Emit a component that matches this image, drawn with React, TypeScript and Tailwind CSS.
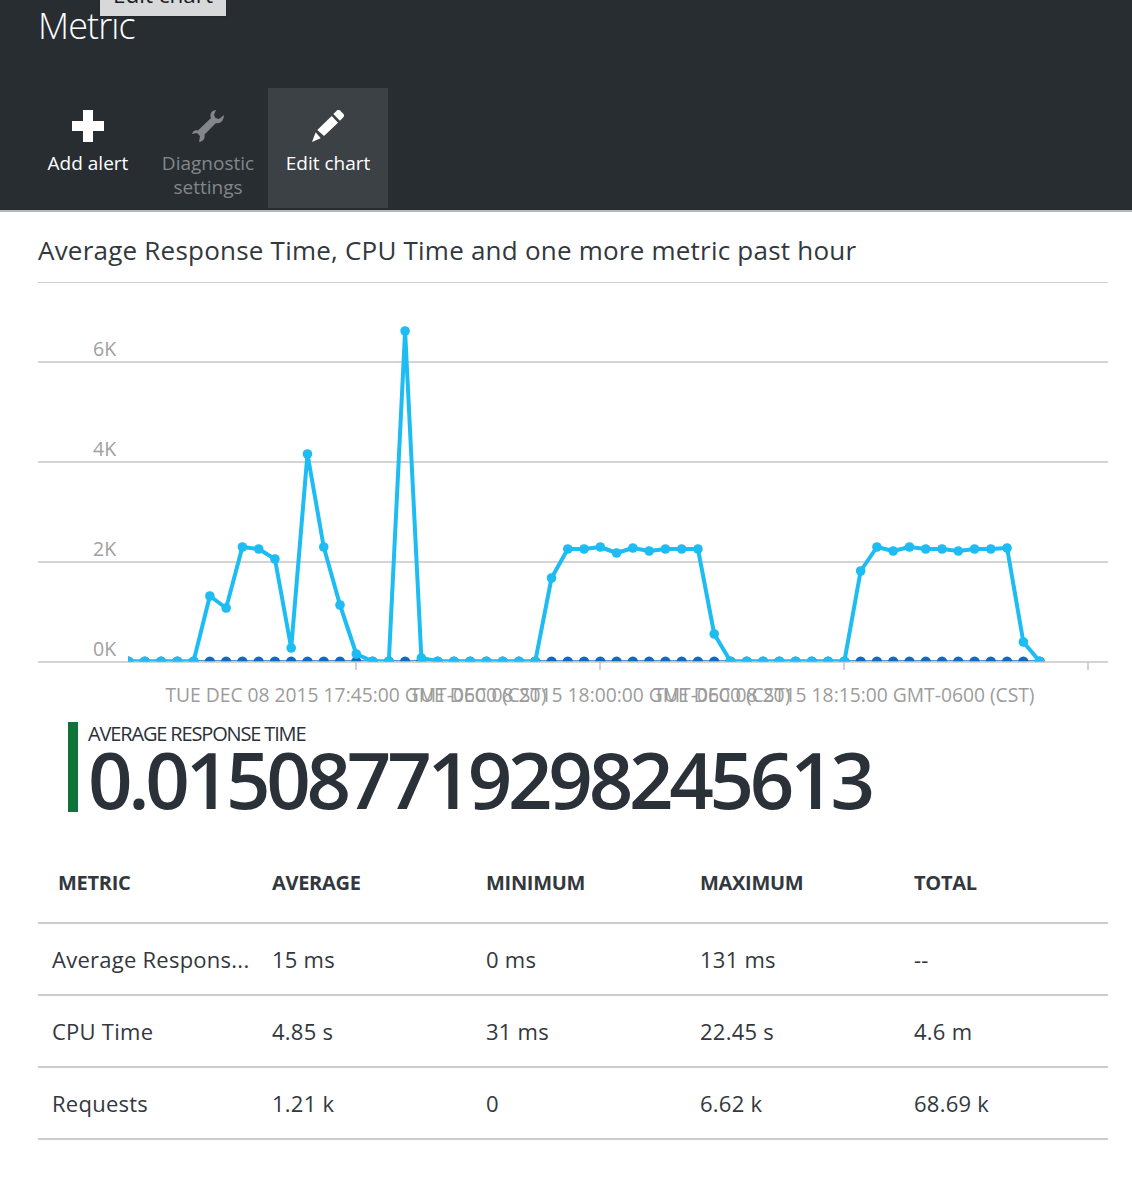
const BASE = 661.3;
const raw = [
  0, 0, 0, 0, 0, 596, 608, 547, 549, 559, 648, 454, 547, 605, 654, 0, 0, 331, 658,
  0, 0, 0, 0, 0, 0, 0, 578, 549, 549, 547, 553, 548, 551, 549, 549, 549, 634, 0,
  0, 0, 0, 0, 0, 0, 0, 571, 547, 551, 547, 549, 549, 551, 549, 549, 548, 642, 0,
];
const pts = raw.map((y, i) => ({ x: 128.5 + 16.27 * i, y: (y || BASE) - 283 }));
const pathD = pts.map((p) => `${p.x},${p.y}`).join(" ");
const floor = BASE - 283;

const headers = ["METRIC", "AVERAGE", "MINIMUM", "MAXIMUM", "TOTAL"];
const rows = [
  ["Average Respons...", "15 ms", "0 ms", "131 ms", "--"],
  ["CPU Time", "4.85 s", "31 ms", "22.45 s", "4.6 m"],
  ["Requests", "1.21 k", "0", "6.62 k", "68.69 k"],
];

function Chart() {
  const labels = [
    { x: 356, t: "TUE DEC 08 2015 17:45:00 GMT-0600 (CST)" },
    { x: 600, t: "TUE DEC 08 2015 18:00:00 GMT-0600 (CST)" },
    { x: 844, t: "TUE DEC 08 2015 18:15:00 GMT-0600 (CST)" },
  ];
  return (
    <svg width="1132" height="439" viewBox="0 0 1132 439" className="block -ml-[38px]">
      {[
        { y: 79, l: "6K" },
        { y: 179, l: "4K" },
        { y: 279, l: "2K" },
        { y: 379, l: "0K" },
      ].map((g) => (
        <g key={g.l}>
          <line x1="38" x2="1108" y1={g.y} y2={g.y} stroke="#c6c6c6" strokeWidth="1.6" />
          <text x="93" y={g.y - 6} fontSize="19.5" fill="#a0a0a0">
            {g.l}
          </text>
        </g>
      ))}
      {[356, 600, 844, 1088].map((x) => (
        <line key={x} x1={x} x2={x} y1="379" y2="387" stroke="#c6c6c6" strokeWidth="1.6" />
      ))}
      <clipPath id="plot">
        <rect x="128" y="0" width="1000" height={floor} />
      </clipPath>
      <g clipPath="url(#plot)">
        <line x1="128" x2="1040" y1={floor - 0.5} y2={floor - 0.5} stroke="#1469b8" strokeWidth="1" />
        {pts.map((p, i) => (
          <circle key={i} cx={p.x} cy={floor + 0.5} r="5.2" fill="#1469b8" />
        ))}
        <polyline points={pathD} fill="none" stroke="#1dbcf2" strokeWidth="4" strokeLinejoin="round" />
        {pts.map((p, i) => (
          <circle key={i} cx={p.x} cy={p.y === floor ? floor + 0.5 : p.y} r={p.y === floor ? 5.2 : 4.8} fill="#1dbcf2" />
        ))}
      </g>
      {labels.map((l) => (
        <text key={l.x} x={l.x} y="419" textAnchor="middle" fontSize="19.25" fill="#9c9c9c">
          {l.t}
        </text>
      ))}
    </svg>
  );
}

function ToolButton({
  icon,
  label,
  active,
  muted,
}: {
  icon: React.ReactNode;
  label: React.ReactNode;
  active?: boolean;
  muted?: boolean;
}) {
  return (
    <div
      className={`w-[120px] h-[120px] flex flex-col items-center pt-[22px] ${active ? "bg-[#3c4145]" : ""} ${
        muted ? "text-[#83878a]" : "text-white"
      }`}
    >
      <div className="h-[32px] flex items-center justify-center">{icon}</div>
      <div className="mt-[9px] text-[19px] leading-[24px] text-center">{label}</div>
    </div>
  );
}

export default function App() {
  return (
    <div className="w-[1132px] h-[1188px] bg-white overflow-hidden relative font-['Open_Sans',sans-serif]">
      <header className="h-[212px] bg-[#282d31] border-b-2 border-[#b4b6b8] pl-[28px]">
        <h1 className="pl-[10px] pt-[2px] h-[88px] text-[36px] leading-[48px] font-light text-white tracking-[-0.9px]">
          Metric
        </h1>
        <div className="flex">
          <ToolButton
            label="Add alert"
            icon={
              <svg width="32" height="32" viewBox="0 0 32 32">
                <path d="M11 0h10v11h11v10H21v11H11V21H0V11h11z" fill="#fff" />
              </svg>
            }
          />
          <ToolButton
            muted
            label={
              <>
                Diagnostic
                <br />
                settings
              </>
            }
            icon={
              <svg width="32" height="32" viewBox="0 0 32 32">
                <path
                  d="M24 0C20 .5 18 3 18.5 6.500L19 8 6 20.500C3 19.500 1 21 0 24l5-1 3 3-1 6c4-.5 6.500-3.500 5.500-7.500L24 13c4 1 7.500-1.500 8-8l-5 4-3.500-1L22 5z"
                  fill="#83878a"
                />
              </svg>
            }
          />
          <ToolButton
            active
            label="Edit chart"
            icon={
              <svg width="32" height="32" viewBox="0 0 32 32">
                <path d="M0 32L3.700 22.300 8.700 28.300z" fill="#fff" />
                <path d="M5.300 20L19.700 6 26 12.700 12 26z" fill="#fff" />
                <path d="M21.300 4L25 .5Q26.500-.7 28 .5L31.500 4Q32.700 5.500 31.500 7L28 10.700z" fill="#fff" />
              </svg>
            }
          />
        </div>
      </header>
      <div className="absolute left-[100px] top-0 w-[126px] h-[16px] bg-[#d6d8da] overflow-hidden flex justify-center shadow-sm">
        <span className="text-[22.5px] leading-[30px] -mt-[20px] h-[30px] text-[#1a1a1a] whitespace-nowrap">Edit chart</span>
      </div>
      <main className="pl-[38px] pr-[24px]">
        <h2 className="h-[71px] pt-[20px] border-b border-[#d2d2d2] text-[26px] leading-[36px] text-[#32383e] tracking-[0.22px]">
          Average Response Time, CPU Time and one more metric past hour
        </h2>
        <Chart />
        <section className="ml-[30px] h-[90px] border-l-[10px] border-[#0f7238] pl-[10px] text-[#2b3138]">
          <div className="text-[20px] leading-[24px] tracking-[-1.15px] whitespace-nowrap">AVERAGE RESPONSE TIME</div>
          <div className="text-[78px] leading-[66px] font-semibold tracking-[-4.3px] whitespace-nowrap">0.015087719298245613</div>
        </section>
        <div className="mt-[30px] text-[#32383e]">
          <div className="grid grid-cols-[214px_214px_214px_214px_214px] h-[82px] border-b-2 border-[#cccccc] items-center pt-[2px]">
            {headers.map((h) => (
              <div key={h} className="pl-[20px] text-[20px] font-bold tracking-[-0.3px]">
                {h}
              </div>
            ))}
          </div>
          {rows.map((r) => (
            <div
              key={r[0]}
              className="grid grid-cols-[214px_214px_214px_214px_214px] h-[72px] border-b-2 border-[#cccccc] items-center text-[22px] tracking-[0.25px]"
            >
              {r.map((c, i) => (
                <div key={i} className={i === 0 ? "pl-[14px] whitespace-nowrap" : "pl-[20px]"}>
                  {c}
                </div>
              ))}
            </div>
          ))}
        </div>
      </main>
    </div>
  );
}
